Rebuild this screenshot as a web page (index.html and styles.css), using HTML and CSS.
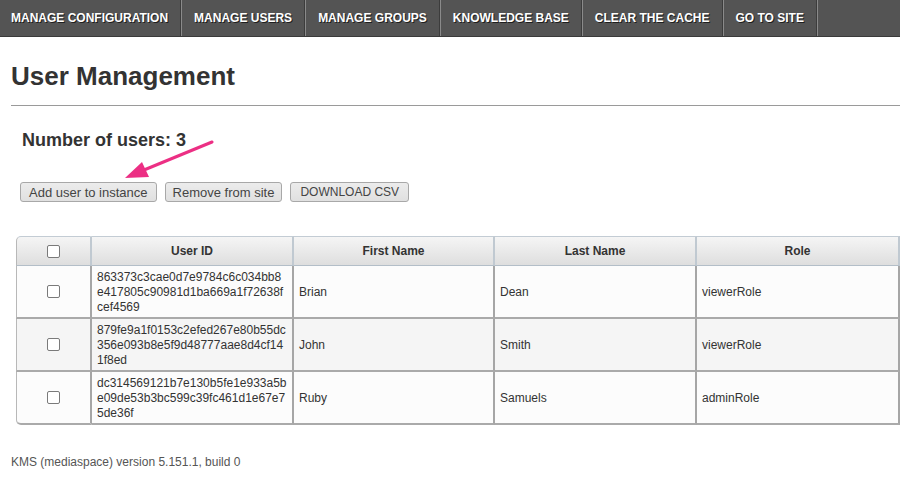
FILE: index.html
```html
<!DOCTYPE html>
<html>
<head>
<meta charset="utf-8">
<link rel="stylesheet" href="styles.css">
</head>
<body>
<nav class="topnav">
  <a class="nav-item">MANAGE CONFIGURATION</a>
  <a class="nav-item">MANAGE USERS</a>
  <a class="nav-item">MANAGE GROUPS</a>
  <a class="nav-item">KNOWLEDGE BASE</a>
  <a class="nav-item">CLEAR THE CACHE</a>
  <a class="nav-item">GO TO SITE</a>
</nav>
<main class="content">
  <h1 class="page-title">User Management</h1>
  <hr class="rule">
  <h2 class="count">Number of users: 3</h2>
  <div class="actions">
    <button class="btn">Add user to instance</button>
    <button class="btn btn-mid">Remove from site</button>
    <button class="btn btn-caps">DOWNLOAD CSV</button>
    <svg class="arrow" width="110" height="50" viewBox="0 0 110 50">
      <line x1="102" y1="7" x2="34" y2="35" stroke="#ec2f84" stroke-width="3" stroke-linecap="round"/>
      <polygon points="15,43 32,27 39,42" fill="#ec2f84"/>
    </svg>
  </div>
  <div class="table-wrap">
    <table class="users">
      <thead>
        <tr>
          <th class="c-check"><span class="cb"></span></th>
          <th class="c-id">User ID</th>
          <th class="c-first">First Name</th>
          <th class="c-last">Last Name</th>
          <th class="c-role">Role</th>
        </tr>
      </thead>
      <tbody>
        <tr>
          <td class="c-check"><span class="cb"></span></td>
          <td class="c-id">863373c3cae0d7e9784c6c034bb8e417805c90981d1ba669a1f72638fcef4569</td>
          <td>Brian</td>
          <td>Dean</td>
          <td>viewerRole</td>
        </tr>
        <tr class="alt">
          <td class="c-check"><span class="cb"></span></td>
          <td class="c-id">879fe9a1f0153c2efed267e80b55dc356e093b8e5f9d48777aae8d4cf141f8ed</td>
          <td>John</td>
          <td>Smith</td>
          <td>viewerRole</td>
        </tr>
        <tr>
          <td class="c-check"><span class="cb"></span></td>
          <td class="c-id">dc314569121b7e130b5fe1e933a5be09de53b3bc599c39fc461d1e67e75de36f</td>
          <td>Ruby</td>
          <td>Samuels</td>
          <td>adminRole</td>
        </tr>
      </tbody>
    </table>
  </div>
  <p class="footer">KMS (mediaspace) version 5.151.1, build 0</p>
</main>
</body>
</html>
```
FILE: styles.css
```css
html, body {
  margin: 0;
  padding: 0;
  background: #ffffff;
  font-family: "Liberation Sans", Arial, sans-serif;
  color: #333;
  overflow: hidden;
}

.topnav {
  display: flex;
  height: 37px;
  background: #545454;
  border-bottom: 1px solid #3a3a3a;
  box-sizing: border-box;
}

.nav-item {
  display: flex;
  align-items: center;
  padding: 0 12px 0 12px;
  font-size: 12px;
  font-weight: bold;
  color: #fff;
  text-shadow: 1px 1px 0 #1e1e1e;
  border-right: 1px solid #3c3c3c;
  box-shadow: 1px 0 0 #8a8a8a;
  margin-right: 1px;
  white-space: nowrap;
}

.nav-item:first-child {
  padding-left: 11px;
}

.content {
  padding: 0 0 0 11px;
}

.page-title {
  margin: 0;
  padding-top: 24px;
  font-size: 26px;
  line-height: 30px;
  font-weight: bold;
  color: #333;
}

.rule {
  margin: 14px 0 0 0;
  border: 0;
  border-top: 1px solid #9a9a9a;
  height: 0;
}

.count {
  margin: 24px 0 0 11px;
  font-size: 18px;
  line-height: 21px;
  font-weight: bold;
  color: #333;
}

.actions {
  position: relative;
  display: flex;
  gap: 8px;
  margin: 31px 0 0 9px;
}

.btn {
  height: 20px;
  padding: 0 8px;
  font-family: "Liberation Sans", Arial, sans-serif;
  font-size: 13px;
  color: #444;
  background: linear-gradient(#ececec, #e0e0e0);
  border: 1px solid #a8a8a8;
  border-radius: 3px;
}

.btn-mid {
  padding: 0 7px;
}

.btn-caps {
  font-size: 12px;
  padding: 0 9px;
}

.arrow {
  position: absolute;
  left: 90px;
  top: -47px;
}

.table-wrap {
  margin: 34px 0 0 5px;
  width: 900px;
}

.users {
  width: 884px;
  border-collapse: separate;
  border-spacing: 0;
  font-size: 12px;
  color: #333;
  table-layout: fixed;
}

.users th {
  box-sizing: border-box;
  height: 30px;
  padding: 0;
  font-weight: bold;
  text-align: center;
  background: linear-gradient(#f5f5f5, #dedede);
  border-top: 1px solid #c3ccd4;
  border-bottom: 1px solid #b3bec8;
  border-right: 2px solid #c0c9d1;
}

.users th:first-child {
  border-left: 1px solid #b8b8b8;
  border-top-left-radius: 5px;
}

.users th.c-check { width: 76px; }
.users th.c-id { width: 202px; }
.users th.c-first { width: 201px; }
.users th.c-last { width: 202px; }
.users th.c-role { width: 203px; }

.users td {
  padding: 4px 5px 2px 5px;
  line-height: 15px;
  height: 45px;
  background: #fcfcfc;
  border-bottom: 2px solid #aaaaaa;
  border-right: 2px solid #a6a6a6;
  vertical-align: middle;
}

.users td:first-child {
  border-left: 1px solid #b8b8b8;
}

.users tbody tr:last-child td:first-child {
  border-bottom-left-radius: 5px;
}

.users tr.alt td {
  background: #f5f5f5;
}

.users td.c-check {
  padding: 0;
  text-align: center;
}

.users td.c-id {
  word-break: break-all;
}

.cb {
  display: inline-block;
  width: 11px;
  height: 11px;
  border: 1px solid #7a7a7a;
  border-radius: 2px;
  background: #fff;
  vertical-align: middle;
}

.footer {
  margin: 30px 0 0 0;
  font-size: 12px;
  color: #555;
}
```
